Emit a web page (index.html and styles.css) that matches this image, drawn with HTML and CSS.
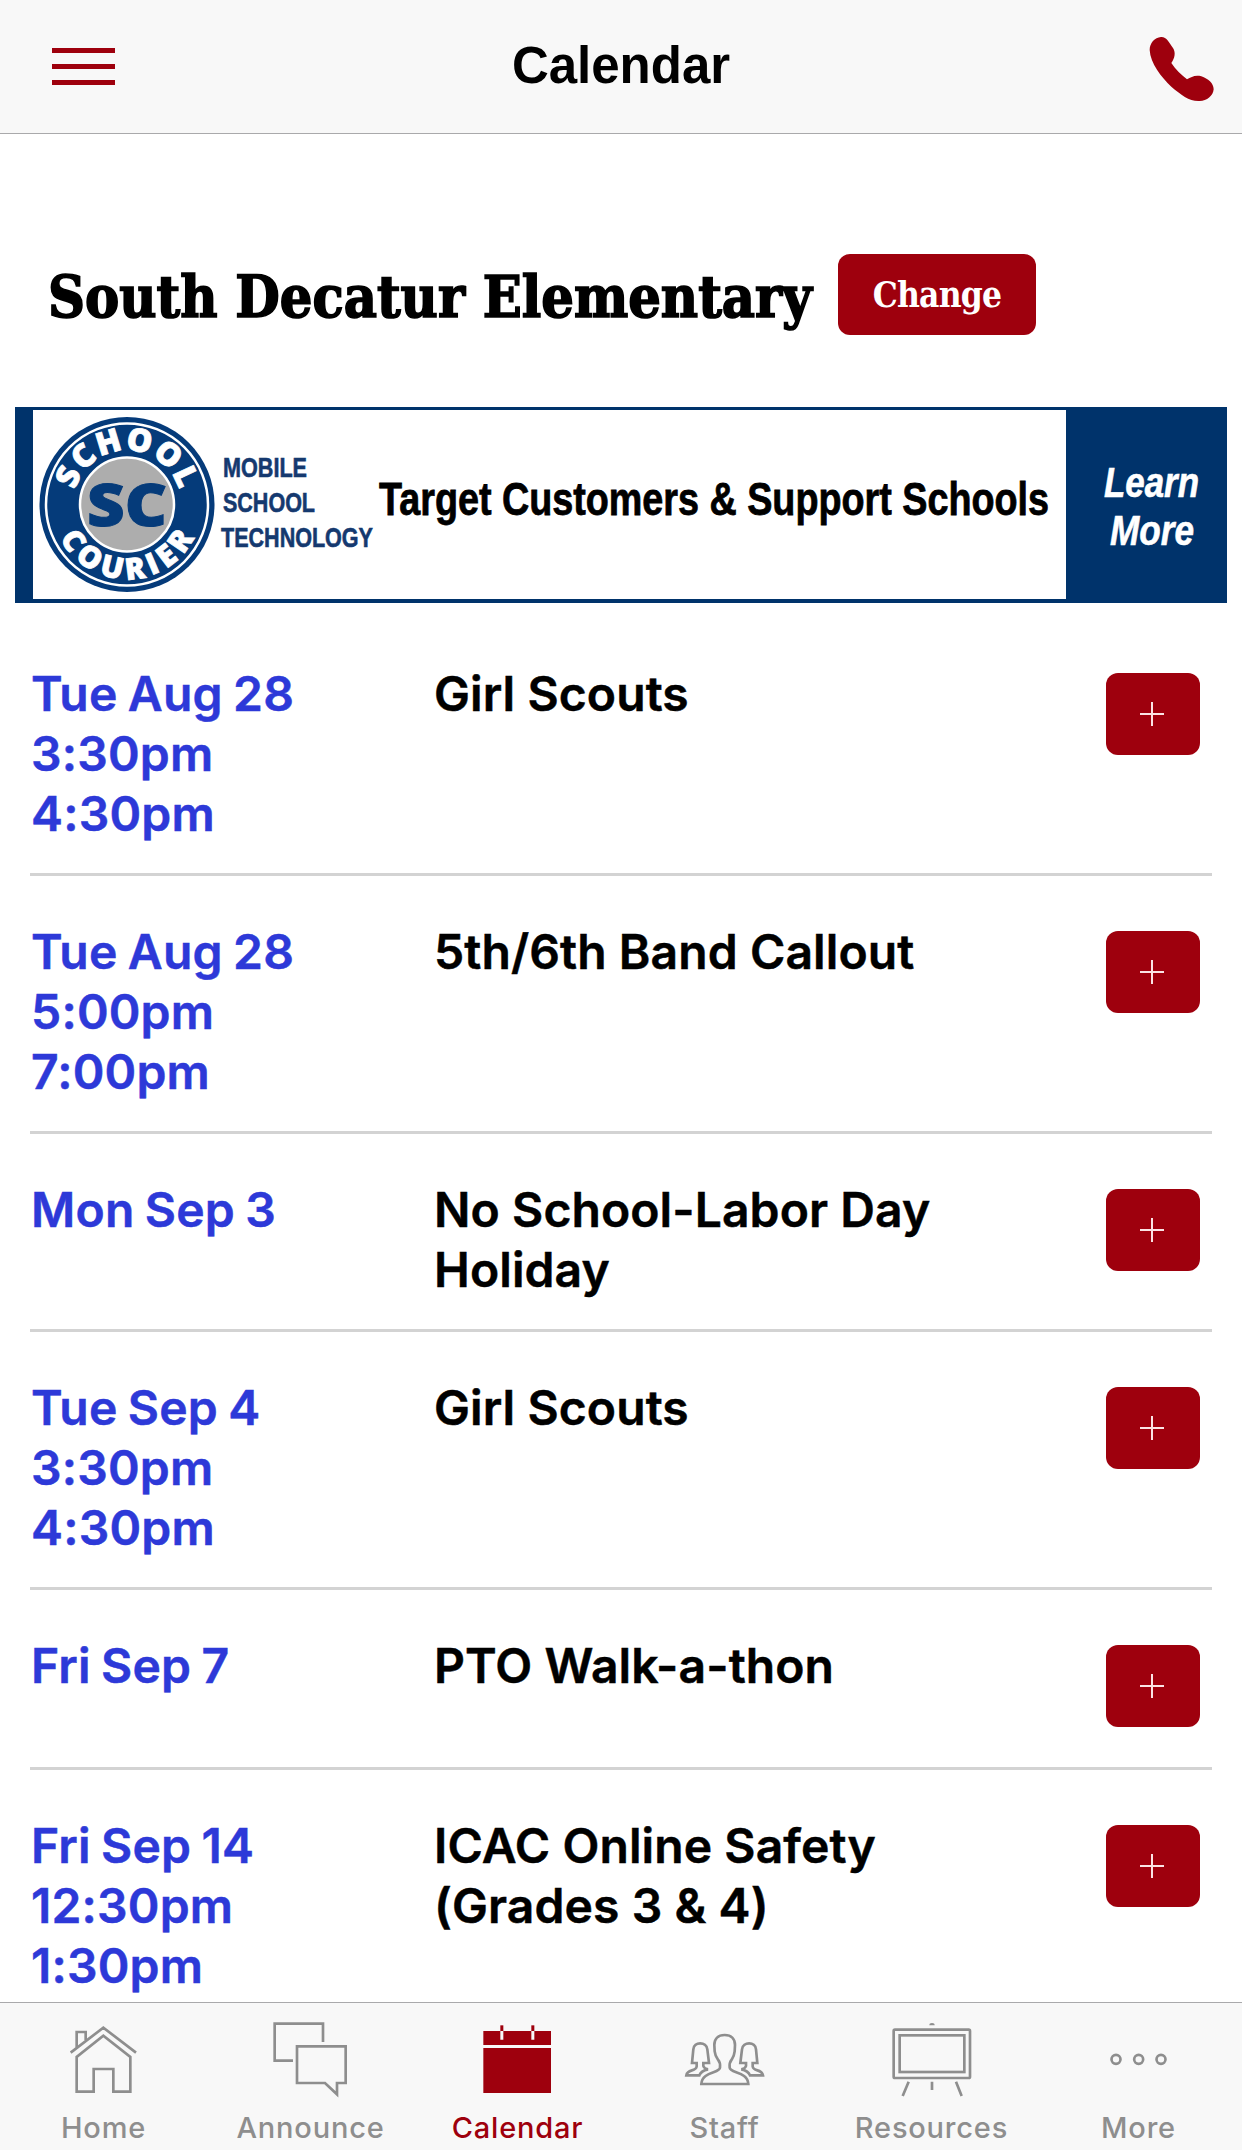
FILE: index.html
```
<!DOCTYPE html>
<html lang="en">
<head>
    <meta charset="UTF-8">
    <meta name="viewport" content="width=device-width, initial-scale=1.0">
    <title>Calendar</title>
    <link rel="stylesheet" href="styles.css">
</head>
<body>
    <header class="top-bar">
        <button class="menu-button" aria-label="Menu">
            <span></span>
            <span></span>
            <span></span>
        </button>
        <h1 class="page-title">Calendar</h1>
        <a href="#" class="phone-link" aria-label="Call">
            <svg width="67" height="67" viewBox="145 105 201 201" fill="currentColor">
                <path d="M150 150C150 130 165 112 184 111C201 110 208 128 220 144C229 158 225 175 215 189C228 210 245 224 262 238C275 232 285 224 305 229C325 236 342 250 342 268C340 288 322 303 300 303C270 305 245 285 215 260C185 232 152 190 150 150z"/>
            </svg>
        </a>
    </header>

    <main class="content">
        <div class="school">
            <h2 class="school-name">South Decatur Elementary</h2>
            <button class="change-button">Change</button>
        </div>

        <a href="#" class="banner">
            <svg width="1212" height="196" viewBox="0 0 1212 196">
                <rect width="1212" height="196" fill="#00336b"/>
                <rect x="18" y="3" width="1033" height="189" fill="#fff"/>
                <circle cx="112" cy="97.500" r="87.5" fill="#053b7a"/>
                <circle cx="112" cy="97.500" r="81" fill="none" stroke="#fff" stroke-width="2.5"/>
                <circle cx="112" cy="97.500" r="47" fill="#adadad" stroke="#fff" stroke-width="2.5"/>
                <path id="arc-top" d="M58 97.500A54 54 0 0 1 166 97.500" fill="none"/>
                <path id="arc-bottom" d="M37 97.500A75 75 0 0 0 187 97.500" fill="none"/>
                <text class="logo-ring"><textPath href="#arc-top" startOffset="50%" text-anchor="middle" textLength="140">SCHOOL</textPath></text>
                <text class="logo-ring logo-ring-bottom"><textPath href="#arc-bottom" startOffset="50%" text-anchor="middle" textLength="166">COURIER</textPath></text>
                <text class="logo-initials" x="72" y="119" textLength="80" lengthAdjust="spacingAndGlyphs">SC</text>
                <text class="banner-tag" x="208" y="70" textLength="84" lengthAdjust="spacingAndGlyphs">MOBILE</text>
                <text class="banner-tag" x="208" y="105" textLength="92" lengthAdjust="spacingAndGlyphs">SCHOOL</text>
                <text class="banner-tag" x="206" y="140" textLength="152" lengthAdjust="spacingAndGlyphs">TECHNOLOGY</text>
                <text class="banner-text" x="364" y="108" textLength="670" lengthAdjust="spacingAndGlyphs">Target Customers &amp; Support Schools</text>
                <text class="banner-more" x="1089" y="90" textLength="95" lengthAdjust="spacingAndGlyphs">Learn</text>
                <text class="banner-more" x="1095" y="138" textLength="84" lengthAdjust="spacingAndGlyphs">More</text>
            </svg>
        </a>

        <ul class="events">
            <li class="event">
                <div class="event-date">Tue Aug 28<br>3:30pm<br>4:30pm</div>
                <div class="event-name">Girl Scouts</div>
                <button class="add-button" aria-label="Add"></button>
            </li>
            <li class="event">
                <div class="event-date">Tue Aug 28<br>5:00pm<br>7:00pm</div>
                <div class="event-name">5th/6th Band Callout</div>
                <button class="add-button" aria-label="Add"></button>
            </li>
            <li class="event">
                <div class="event-date">Mon Sep 3</div>
                <div class="event-name">No School-Labor Day Holiday</div>
                <button class="add-button" aria-label="Add"></button>
            </li>
            <li class="event">
                <div class="event-date">Tue Sep 4<br>3:30pm<br>4:30pm</div>
                <div class="event-name">Girl Scouts</div>
                <button class="add-button" aria-label="Add"></button>
            </li>
            <li class="event">
                <div class="event-date">Fri Sep 7</div>
                <div class="event-name">PTO Walk-a-thon</div>
                <button class="add-button" aria-label="Add"></button>
            </li>
            <li class="event">
                <div class="event-date">Fri Sep 14<br>12:30pm<br>1:30pm</div>
                <div class="event-name">ICAC Online Safety (Grades 3 &amp; 4)</div>
                <button class="add-button" aria-label="Add"></button>
            </li>
        </ul>
    </main>

    <nav class="tab-bar">
        <a href="#" class="tab">
            <svg class="tab-icon" viewBox="0 0 270 270">
                <path d="M35 122L133 47L231 122M53 106V60H80V84"/>
                <path d="M53 239V135L133 71L214 135V239H163V171H104V239z"/>
            </svg>
            <span>Home</span>
        </a>
        <a href="#" class="tab">
            <svg class="tab-icon" viewBox="0 0 270 270">
                <path d="M171 90V35H26V146H81"/>
                <path d="M93 103H239V213H213V247L177 213H93z"/>
            </svg>
            <span>Announce</span>
        </a>
        <a href="#" class="tab active">
            <svg class="tab-icon" viewBox="0 0 270 270">
                <g fill="currentColor" stroke="none">
                    <rect x="31" y="57" width="203" height="42"/>
                    <rect x="31" y="108" width="203" height="135"/>
                    <rect x="82" y="40" width="9" height="17"/>
                    <rect x="175" y="40" width="9" height="17"/>
                </g>
                <path class="calendar-pins" d="M86.500 57V83M179.500 57V83"/>
            </svg>
            <span>Calendar</span>
        </a>
        <a href="#" class="tab">
            <svg class="tab-icon" viewBox="0 0 270 270">
                <path d="M134 69C113 69 103 82 103 99L104 118C105 128 109 136 114 143C120 150 121 158 120 167C119 184 66 178 64 216H205C203 178 150 184 149 167C148 158 149 150 155 143C160 136 163 128 164 118L165 99C165 82 155 69 134 69z"/>
                <path id="staff-side" d="M50 153H36L40 112C41 88 80 88 82 112L87 153H70V162C72 169 78 171 84 172C70 175 62 179 58 190H19C22 170 48 180 50 163z"/>
                <use href="#staff-side" transform="translate(268) scale(-1 1)"/>
            </svg>
            <span>Staff</span>
        </a>
        <a href="#" class="tab">
            <svg class="tab-icon" viewBox="0 0 270 270">
                <rect x="20" y="53" width="229" height="145" rx="4"/>
                <rect x="38" y="70" width="194" height="110"/>
                <path d="M65 209L47 252M135 209V234M207 209L224 252"/>
                <path d="M127 40A8 7 0 0 1 143 40z" fill="currentColor" stroke="none"/>
            </svg>
            <span>Resources</span>
        </a>
        <a href="#" class="tab">
            <svg class="tab-icon" viewBox="0 0 270 270">
                <circle cx="66" cy="142" r="13.500"/>
                <circle cx="134" cy="142" r="13.500"/>
                <circle cx="201" cy="142" r="13.500"/>
            </svg>
            <span>More</span>
        </a>
    </nav>
</body>
</html>
```
FILE: styles.css
```
* {
    margin: 0;
    padding: 0;
    box-sizing: border-box;
}

body {
    font-family: Inter, sans-serif;
    background: #fff;
    color: #000;
    height: 2150px;
    display: flex;
    flex-direction: column;
    overflow: hidden;
}

a {
    color: inherit;
    text-decoration: none;
}

button {
    border: none;
    font: inherit;
    cursor: pointer;
}

.top-bar {
    flex: none;
    height: 134px;
    padding: 0 27px 0 52px;
    background: #f8f8f8;
    border-bottom: 1px solid #a9a9ab;
    display: grid;
    grid-template-columns: 200px 1fr 225px;
    align-items: center;
    color: #9e000d;
}

.menu-button {
    background: none;
    width: 63px;
    display: flex;
    flex-direction: column;
    gap: 11px;
}

.menu-button span {
    height: 5px;
    background: #9e000d;
}

.page-title {
    font-family: "Liberation Sans", Arial, sans-serif;
    font-size: 51px;
    font-weight: 700;
    line-height: 60px;
    padding-bottom: 2px;
    text-align: center;
    color: #000;
}

.phone-link {
    justify-self: end;
    height: 67px;
    margin-top: 3px;
}

.content {
    flex: 1;
    min-height: 0;
    overflow: hidden;
}

.school {
    display: flex;
    align-items: center;
    gap: 24px;
    height: 81px;
    margin: 120px 0 72px 48px;
}

.school-name {
    width: 766px;
    padding-top: 3px;
    font-family: "DejaVu Serif Condensed", "DejaVu Serif", serif;
    font-stretch: condensed;
    font-size: 57px;
    font-weight: 700;
    white-space: nowrap;
    -webkit-text-stroke: 1.6px #000;
}

.change-button {
    width: 198px;
    height: 81px;
    border-radius: 12px;
    background: #9e000d;
    color: #fff;
    font-family: "DejaVu Serif Condensed", "DejaVu Serif", serif;
    font-stretch: condensed;
    font-size: 35px;
    font-weight: 700;
    letter-spacing: -0.8px;
}

.banner {
    display: block;
    width: 1212px;
    height: 196px;
    margin: 0 15px 15px;
    font-family: "Liberation Sans", Arial, sans-serif;
    font-weight: 700;
}

.logo-ring {
    font-family: "Open Sans", sans-serif;
    font-size: 32px;
    font-weight: 800;
    fill: #fff;
    stroke: #fff;
    stroke-width: 0.8;
}

.logo-ring-bottom {
    font-size: 30px;
}

.logo-initials {
    font-family: "Open Sans", sans-serif;
    font-size: 58px;
    font-weight: 800;
    fill: #053b7a;
    stroke: #053b7a;
    stroke-width: 1;
}

.banner-tag {
    font-size: 27px;
    fill: #15396f;
    stroke: #15396f;
    stroke-width: 0.6;
}

.banner-text {
    font-size: 46px;
    stroke: #000;
    stroke-width: 0.8;
}

.banner-more {
    font-size: 42px;
    font-style: italic;
    fill: #fff;
    stroke: #fff;
    stroke-width: 0.6;
}

.events {
    list-style: none;
    margin: 0 30px;
}

.event {
    display: grid;
    grid-template-columns: 403px 1fr 94px;
    align-items: start;
    padding: 46px 12px 29px 0;
    border-bottom: 3px solid #d3d3d3;
    font-size: 48px;
    font-weight: 640;
    line-height: 60px;
    -webkit-text-stroke: 0.5px currentColor;
}

.event-date {
    padding-left: 1px;
    color: #2d39d8;
    word-spacing: -2px;
    letter-spacing: 0.2px;
}

.event-name {
    padding-left: 1px;
    padding-right: 100px;
    letter-spacing: 0.1px;
}

.add-button {
    justify-self: end;
    width: 94px;
    height: 82px;
    margin: 9px 0 11px;
    border-radius: 12px;
    background:
        linear-gradient(#fbe3e4, #fbe3e4) 34px 40px / 24px 2px no-repeat,
        linear-gradient(#fbe3e4, #fbe3e4) 45px 29px / 2px 24px no-repeat,
        #9e000d;
}

.tab-bar {
    flex: none;
    height: 148px;
    border-top: 1px solid #a9a9ab;
    background: #f8f8f8;
    display: grid;
    grid-template-columns: repeat(6, 1fr);
}

.tab {
    display: flex;
    flex-direction: column;
    align-items: center;
    padding-top: 9px;
    color: #8e8e8e;
    font-size: 29px;
    font-weight: 500;
    line-height: 36px;
    letter-spacing: 0.8px;
}

.tab span {
    margin-top: 8px;
}

.tab-icon {
    width: 90px;
    height: 90px;
    fill: none;
    stroke: currentColor;
    stroke-width: 8;
}

.tab.active {
    color: #9e000d;
}

.calendar-pins {
    stroke: #f8f8f8;
    stroke-width: 9;
}
```
